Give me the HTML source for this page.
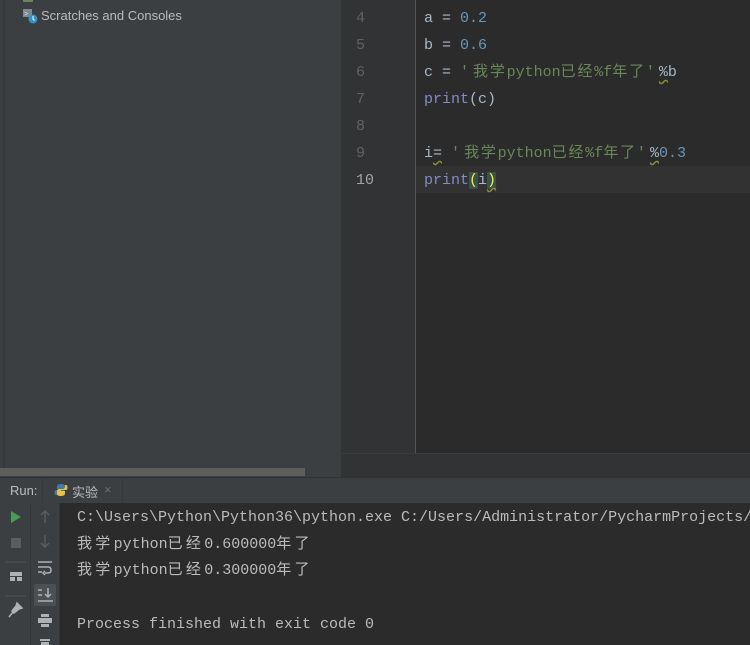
<!DOCTYPE html>
<html><head><meta charset="utf-8"><style>
*{margin:0;padding:0;box-sizing:border-box}
body{width:750px;height:645px;overflow:hidden;background:#2b2b2b;position:relative;font-family:"Liberation Mono","Noto Sans CJK SC",monospace}
.a{position:absolute}
.code{font-size:15px;color:#a9b7c6;white-space:pre;line-height:27px}
.n{color:#6897bb}.s{color:#6a8759}.p{color:#8888c6}
.ln{font-size:15px;color:#606366;line-height:27px;white-space:pre}
.sq{text-decoration:underline wavy #8c8c3e;text-underline-offset:3px}
.c{letter-spacing:1.8px}
.q{letter-spacing:4px}
.cc{letter-spacing:3.3px}
</style></head><body>
<div class="a" style="left:0;top:0;width:341px;height:477px;background:#3c3f41"></div>
<div class="a" style="left:3px;top:0;width:2px;height:477px;background:#37393b"></div>
<div class="a" style="left:23px;top:0;width:10px;height:2px;background:#6a8759"></div>
<svg class="a" style="left:22px;top:8px" width="16" height="16"><rect x="1" y="1" width="9" height="8" fill="#7f8b91"/><text x="2" y="8" font-size="7" fill="#ddd" font-family="Liberation Sans">&gt;</text><circle cx="11" cy="11" r="4.5" fill="#3592c4"/><path d="M11 8v3l1.5 1.5" stroke="#fff" stroke-width="1" fill="none"/></svg>
<div class="a" style="left:41px;top:8px;font:13px 'Liberation Sans',sans-serif;color:#bbbbbb">Scratches and Consoles</div>
<div class="a" style="left:341px;top:0;width:75px;height:453px;background:#313335"></div>
<div class="a" style="left:415px;top:0;width:1px;height:453px;background:#555"></div>
<div class="a" style="left:341px;top:453px;width:409px;height:25px;background:#313335;border-top:1px solid #393b3d"></div>
<div class="a" style="left:341px;top:166px;width:74px;height:27px;background:#313335"></div>
<div class="a" style="left:416px;top:166px;width:334px;height:27px;background:#323232"></div>
<div class="a ln" style="left:356px;top:5px">4
5
6
7
8
9
<span style="color:#a4a3a3">10</span></div>
<div class="a code" style="left:424px;top:5px">a = <span class="n">0.2</span>
b = <span class="n">0.6</span>
c = <span class="s"><span class="q">'</span><span class="c">我学</span>python<span class="c">已经</span>%f<span class="c">年了</span><span class="q">'</span></span><span class="sq">%</span>b
<span class="p">print</span>(c)

i<span class="sq">=</span> <span class="s"><span class="q">'</span><span class="c">我学</span>python<span class="c">已经</span>%f<span class="c">年了</span><span class="q">'</span></span><span class="sq">%</span><span class="n">0.3</span>
<span class="p">print</span><span style="background:#3b514d;color:#ffef28">(</span>i<span style="background:#3b514d;color:#ffef28" class="sq">)</span></div>
<div class="a" style="left:0;top:468px;width:305px;height:8px;background:#5e5e5e"></div>
<div class="a" style="left:0;top:477px;width:750px;height:26px;background:#3c3f41;border-top:1px solid #323232"></div>
<div class="a" style="left:10px;top:483px;font:13px 'Liberation Sans',sans-serif;color:#bbbbbb">Run:</div>
<div class="a" style="left:42px;top:478px;width:81px;height:25px;background:#3c3f41;border-left:1px solid #353739;border-right:1px solid #353739"></div>
<svg class="a" style="left:54px;top:483px" width="14" height="14"><path d="M7 1C3 1 3 3 3 4v2h4v1H2C0 7 0 12 2 12h1v-2c0-1 1-2 2-2h4c1 0 2-1 2-2V3c0-1-1-2-4-2z" fill="#3d7ab2"/><path d="M7 13c4 0 4-2 4-3V8H7V7h5c2 0 2-5 0-5h-1v2c0 1-1 2-2 2H5C4 6 3 7 3 8v3c0 1 1 2 4 2z" fill="#e8c33b"/></svg>
<div class="a" style="left:72px;top:482px;font:13px 'Liberation Sans','Noto Sans CJK SC',sans-serif;color:#bbbbbb">实验</div>
<div class="a" style="left:104px;top:482px;font:13px 'Liberation Sans',sans-serif;color:#6e6e6e">×</div>
<div class="a" style="left:0;top:503px;width:60px;height:142px;background:#3c3f41"></div>
<div class="a" style="left:30px;top:503px;width:1px;height:142px;background:#333537"></div>
<div class="a" style="left:59px;top:503px;width:1px;height:142px;background:#333537"></div>
<svg class="a" style="left:0;top:503px" width="60" height="142">
<path d="M11 8l10 6-10 6z" fill="#499c54"/>
<rect x="11" y="35" width="10" height="10" fill="#5a5d5f"/>
<path d="M5 59h21M5 93h21" stroke="#4f5254"/>
<rect x="10" y="69" width="12" height="4" fill="#afb1b3"/><rect x="10" y="74" width="5" height="4" fill="#afb1b3"/><rect x="17" y="74" width="5" height="4" fill="#afb1b3"/>
<path d="M17 100l5 5-3 1-5 4-2-2 4-5zM13 109l-4 5" stroke="#afb1b3" stroke-width="1.5" fill="#afb1b3"/>
<path d="M45 8v12M41 12l4-4 4 4M45 32v12M41 40l4 4 4-4" stroke="#5a5d5f" stroke-width="1.5" fill="none"/>
<path d="M38 59h14M38 64h10q3 0 3 3t-3 3h-3M45 68l-2 2 2 2M38 69h4" stroke="#afb1b3" stroke-width="1.5" fill="none"/>
<rect x="34" y="81" width="22" height="22" rx="2" fill="#4d5052"/>
<path d="M38 87h4M38 92h4M38 98h15M48 85v9M45 91l3 3 3-3" stroke="#afb1b3" stroke-width="1.5" fill="none"/>
<rect x="41" y="111" width="8" height="3" fill="#afb1b3"/><rect x="38" y="115" width="14" height="5" fill="#afb1b3"/><rect x="41" y="121" width="8" height="3" fill="#afb1b3"/>
<rect x="40" y="136" width="10" height="2" fill="#afb1b3"/><rect x="41" y="139" width="8" height="3" fill="#afb1b3"/>
</svg>
<div class="a code" style="left:77px;top:505px;color:#bbbbbb;line-height:26.7px">C:\Users\Python\Python36\python.exe C:/Users/Administrator/PycharmProjects/
<span class="cc">我学</span>python<span class="cc">已经</span>0.600000<span class="cc">年了</span>
<span class="cc">我学</span>python<span class="cc">已经</span>0.300000<span class="cc">年了</span>

Process finished with exit code 0</div>
</body></html>
